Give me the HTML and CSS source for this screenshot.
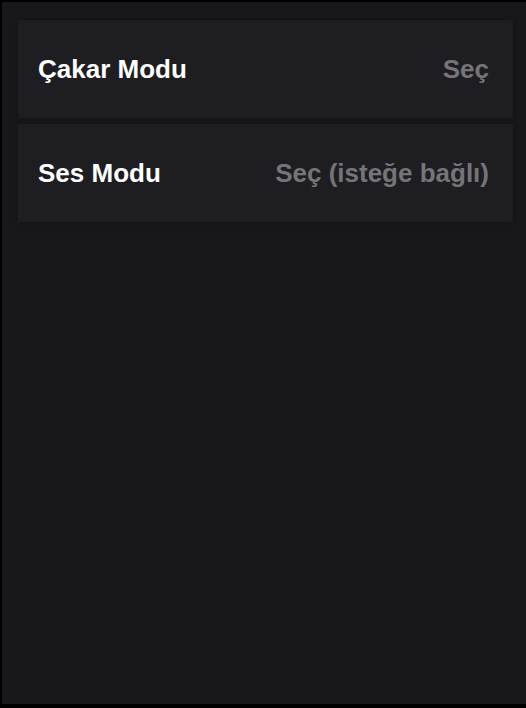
FILE: index.html
```html
<!doctype html>
<html lang="tr">

<head>
  <meta charset="utf-8">
  <title>Mod Seçimi</title>
  <link rel="stylesheet" href="styles.css">
</head>

<body>
  <section class="ekran">
    <div class="satir">
      <p class="etiket">Çakar Modu</p>
      <p class="secim">Seç</p>
    </div>
    <div class="satir">
      <p class="etiket">Ses Modu</p>
      <p class="secim">Seç (isteğe bağlı)</p>
    </div>
  </section>
</body>

</html>
```

FILE: styles.css
```css
* {
  font-family: "Liberation Sans", Arial, Helvetica, sans-serif;
  box-sizing: border-box;
}

html,
body {
  height: 100%;
}

body {
  margin: 0;
  background-color: #000;
  padding: 2px 0 4px 2px;
}

.ekran {
  height: 100%;
  background-color: #18171a;
  padding: 18px 13px 0 16px;
  display: flex;
  flex-direction: column;
  gap: 6px;
}

.satir {
  height: 98px;
  display: flex;
  align-items: center;
  justify-content: space-between;
  padding: 0 24px 0 20px;
  background-color: #1e1d21;
  box-shadow: 0 0 4px rgba(0, 0, 0, 0.35);
}

.satir p {
  margin: 0;
  font-size: 26px;
  font-weight: bold;
}

.etiket {
  color: #fff;
}

.secim {
  color: #767479;
}
```
